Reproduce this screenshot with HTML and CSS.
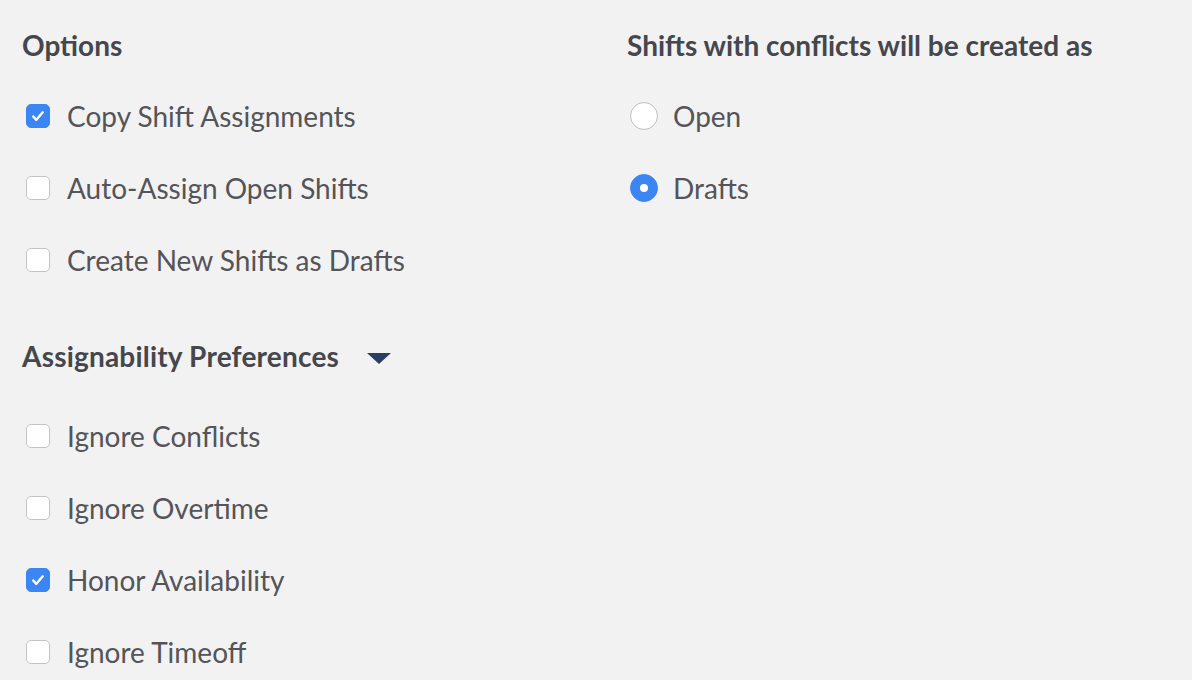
FILE: index.html
```html
<!DOCTYPE html>
<html>
<head>
<meta charset="utf-8">
<link rel="stylesheet" href="styles.css">
</head>
<body>
<div class="page">
  <section class="col col-left">
    <h2 class="heading">Options</h2>
    <ul class="list">
      <li class="row"><span class="box checked"><svg viewBox="0 0 24 24"><path d="M6.8 12.6l3.4 3.6L17.2 8" /></svg></span><span class="label">Copy Shift Assignments</span></li>
      <li class="row"><span class="box"></span><span class="label">Auto-Assign Open Shifts</span></li>
      <li class="row"><span class="box"></span><span class="label">Create New Shifts as Drafts</span></li>
    </ul>
    <h2 class="heading heading-toggle">Assignability Preferences <span class="caret"></span></h2>
    <ul class="list list-assign">
      <li class="row"><span class="box"></span><span class="label">Ignore Conflicts</span></li>
      <li class="row"><span class="box"></span><span class="label">Ignore Overtime</span></li>
      <li class="row"><span class="box checked"><svg viewBox="0 0 24 24"><path d="M6.8 12.6l3.4 3.6L17.2 8" /></svg></span><span class="label">Honor Availability</span></li>
      <li class="row"><span class="box"></span><span class="label">Ignore Timeoff</span></li>
    </ul>
  </section>
  <section class="col col-right">
    <h2 class="heading">Shifts with conflicts will be created as</h2>
    <ul class="list">
      <li class="row"><span class="radio"></span><span class="label">Open</span></li>
      <li class="row"><span class="radio selected"></span><span class="label">Drafts</span></li>
    </ul>
  </section>
</div>
</body>
</html>
```

FILE: styles.css
```css
html, body {
  margin: 0;
  padding: 0;
  background: #f2f2f2;
}
body {
  font-family: Lato, "Liberation Sans", sans-serif;
  width: 1192px;
  height: 680px;
  overflow: hidden;
}
.page {
  display: grid;
  grid-template-columns: 605px 1fr;
  padding: 29px 0 0 22px;
}
.heading {
  margin: 0;
  font-size: 28px;
  line-height: 32px;
  font-weight: 700;
  color: #46464d;
  display: flex;
  align-items: center;
}
.heading-toggle {
  margin-top: 44px;
  letter-spacing: 0.2px;
}
.caret {
  display: inline-block;
  width: 0;
  height: 0;
  margin-left: 28px;
  margin-top: 4px;
  border-left: 12px solid transparent;
  border-right: 12px solid transparent;
  border-top: 11px solid #2d3c63;
}
.list {
  list-style: none;
  margin: 19px 0 0 0;
  padding: 0;
}
.list-assign {
  margin-top: 28px;
}
.row {
  height: 72px;
  display: flex;
  align-items: center;
}
.label {
  font-size: 28px;
  color: #545459;
  line-height: 32px;
}
.box {
  box-sizing: border-box;
  width: 24px;
  height: 24px;
  margin-left: 4px;
  margin-right: 17px;
  border: 1px solid #c4c4c4;
  border-radius: 5px;
  background: #fff;
  display: flex;
  align-items: center;
  justify-content: center;
}
.box.checked {
  background: #3c86f4;
  border-color: #3c86f4;
}
.box svg {
  width: 24px;
  height: 24px;
  fill: none;
  stroke: #fff;
  stroke-width: 2.6;
  stroke-linecap: round;
  stroke-linejoin: round;
}
.radio {
  box-sizing: border-box;
  width: 28px;
  height: 28px;
  margin-left: 3px;
  margin-right: 15px;
  border: 1px solid #bdbdbd;
  border-radius: 50%;
  background: #fff;
  display: flex;
  align-items: center;
  justify-content: center;
}
.radio.selected {
  background: #3c86f4;
  border-color: #3c86f4;
}
.radio.selected::after {
  content: "";
  width: 8px;
  height: 8px;
  border-radius: 50%;
  background: #fff;
}
```
